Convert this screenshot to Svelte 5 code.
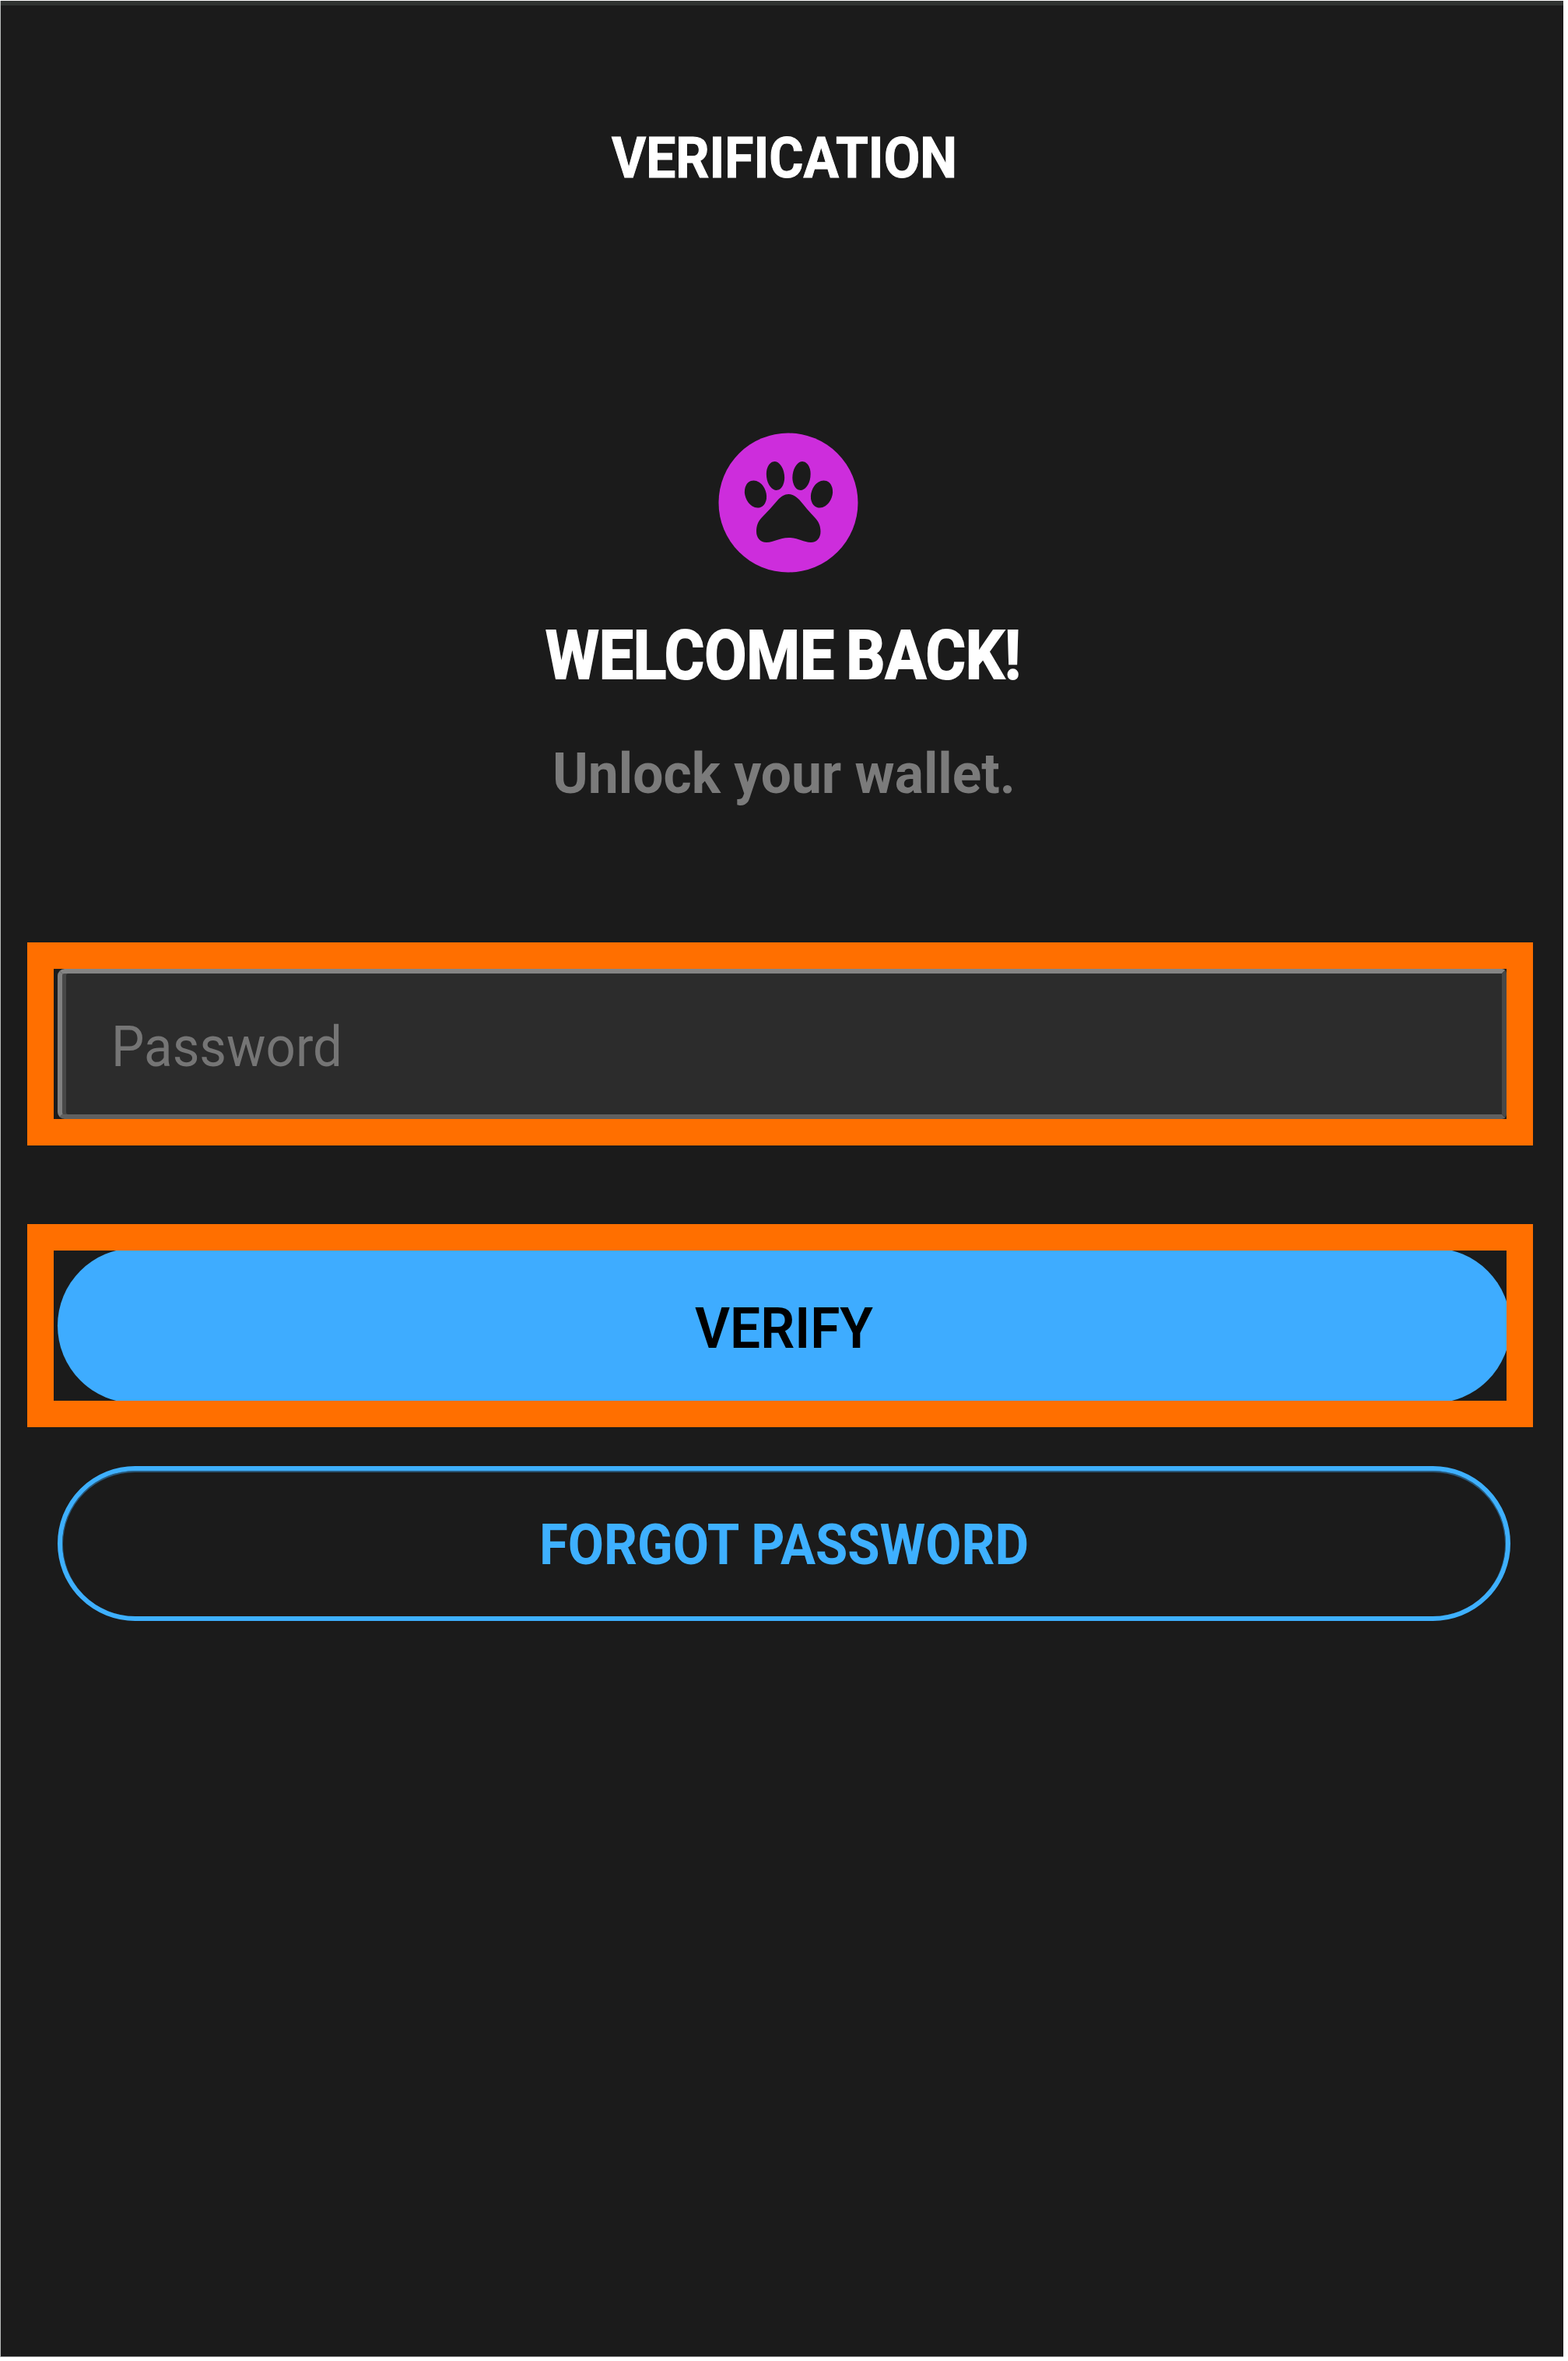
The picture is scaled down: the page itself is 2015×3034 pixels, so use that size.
<script>
  const labels = {
    title: { text: 'VERIFICATION', width: 444, size: 72 },
    heading: { text: 'WELCOME BACK!', width: 611, size: 88 },
    hint: { text: 'Unlock your wallet.', width: 595, size: 72 },
    password: { text: 'Password', width: 297, size: 72 },
    verify: { text: 'VERIFY', width: 229, size: 72 },
    forgot: { text: 'FORGOT PASSWORD', width: 629, size: 72 },
  };
</script>

<!-- Text set to a fixed measure, so the letters take condensed proportions -->
{#snippet label(item)}
  <svg class="label" width={item.width} height={item.size} role="img" aria-label={item.text}>
    <text x="0" y={item.size * 0.8415} font-size={item.size} textLength={item.width} lengthAdjust="spacingAndGlyphs">{item.text}</text>
  </svg>
{/snippet}

<main class="screen">
  <h1 class="title">{@render label(labels.title)}</h1>

  <svg class="logo" viewBox="0 0 220 210" width="220" height="210" aria-hidden="true">
    <circle cx="113" cy="106" r="89.5" fill="#cd2ddc" />
    <g fill="#1b1b1b">
      <ellipse cx="96.5" cy="71.500" rx="11.5" ry="18.5" transform="rotate(-7 96.5 71.5)" />
      <ellipse cx="130" cy="71.5" rx="11.5" ry="18.5" transform="rotate(7 130 71.5)" />
      <ellipse cx="71" cy="95" rx="13.5" ry="18" transform="rotate(-20 71 95)" />
      <ellipse cx="156" cy="95" rx="13.5" ry="18" transform="rotate(20 156 95)" />
      <path d="M113.5 95C108 95 104 98 100 102C93 110 86 118 79 125C74 130 72 136 72 143C72 151 77 157 85 157C95 157 101 151 113.5 151C126 151 132 157 142 157C150 157 154.5 151 154.5 143C154.5 136 152 130 147 125C140 118 134 110 127 102C123 98 119 95 113.5 95Z" />
    </g>
  </svg>

  <h2 class="heading">{@render label(labels.heading)}</h2>
  <p class="hint">{@render label(labels.hint)}</p>

  <div class="frame frame-input">
    <div class="field">{@render label(labels.password)}</div>
  </div>

  <div class="frame frame-button">
    <button class="verify">{@render label(labels.verify)}</button>
  </div>

  <button class="forgot">{@render label(labels.forgot)}</button>
</main>

<style>
  :global(body) {
    background: #fff;
  }

  .screen {
    box-sizing: border-box;
    width: 2009px;
    height: 3028px;
    margin-top: 1px;
    padding-top: 160px;
    display: flex;
    flex-direction: column;
    align-items: flex-start;
    background: #1b1b1b;
    border-left: 1px solid #b9bbba;
    border-bottom: 1px solid #9c9a9a;
    box-shadow: inset 0 6px 0 #303331;
    font-family: Roboto, "Liberation Sans", sans-serif;
  }

  .label {
    display: block;
    overflow: visible;
    fill: currentColor;
    flex: none;
  }

  h1, h2, p, button {
    margin: 0;
    font-family: inherit;
  }

  .title {
    margin: 6px 0 0 785px;
    color: #fff;
    font-weight: 700;
    stroke: #fff;
    stroke-width: 1px;
  }

  .logo {
    display: block;
    flex: none;
    margin: 301px 0 0 899px;
  }

  .heading {
    margin: 48px 0 0 700px;
    color: #fff;
    font-weight: 700;
    word-spacing: -5px;
    stroke: #fff;
    stroke-width: 2px;
  }

  .hint {
    margin: 72px 0 0 709px;
    color: #7b7b7b;
    font-weight: 700;
  }

  .frame {
    box-sizing: border-box;
    flex: none;
    width: 1935px;
    margin-left: 34px;
    border: 34px solid #ff6f00;
    overflow: hidden;
  }

  .frame-input {
    height: 261px;
    margin-top: 181px;
    padding-left: 5px;
  }

  .field {
    box-sizing: border-box;
    height: 193px;
    padding: 58px 0 0 63px;
    border: 6px solid;
    border-color: #858585 #484848 #606060 #808080;
    border-radius: 9px 6px 6px 9px;
    background: #2c2c2c;
    box-shadow: inset 5px 0 0 #484848;
    color: #757575;
    font-weight: 400;
  }

  .frame-button {
    height: 261px;
    margin-top: 101px;
    padding-left: 5px;
  }

  .verify {
    display: flex;
    box-sizing: border-box;
    width: 1867px;
    height: 199px;
    margin-top: -3px;
    padding: 67px 0 0 819px;
    border: 0;
    border-radius: 100px;
    background: #3eacff;
    color: #000;
    font-weight: 600;
  }

  .forgot {
    display: flex;
    align-items: center;
    box-sizing: border-box;
    flex: none;
    width: 1867px;
    height: 199px;
    margin: 50px 0 0 73px;
    padding: 2px 0 0 613px;
    border: 6px solid #3eb0ff;
    border-radius: 100px;
    background: transparent;
    box-shadow: inset 0 1px 0 1px #28587a;
    color: #3eb0ff;
    font-weight: 700;
  }
</style>
